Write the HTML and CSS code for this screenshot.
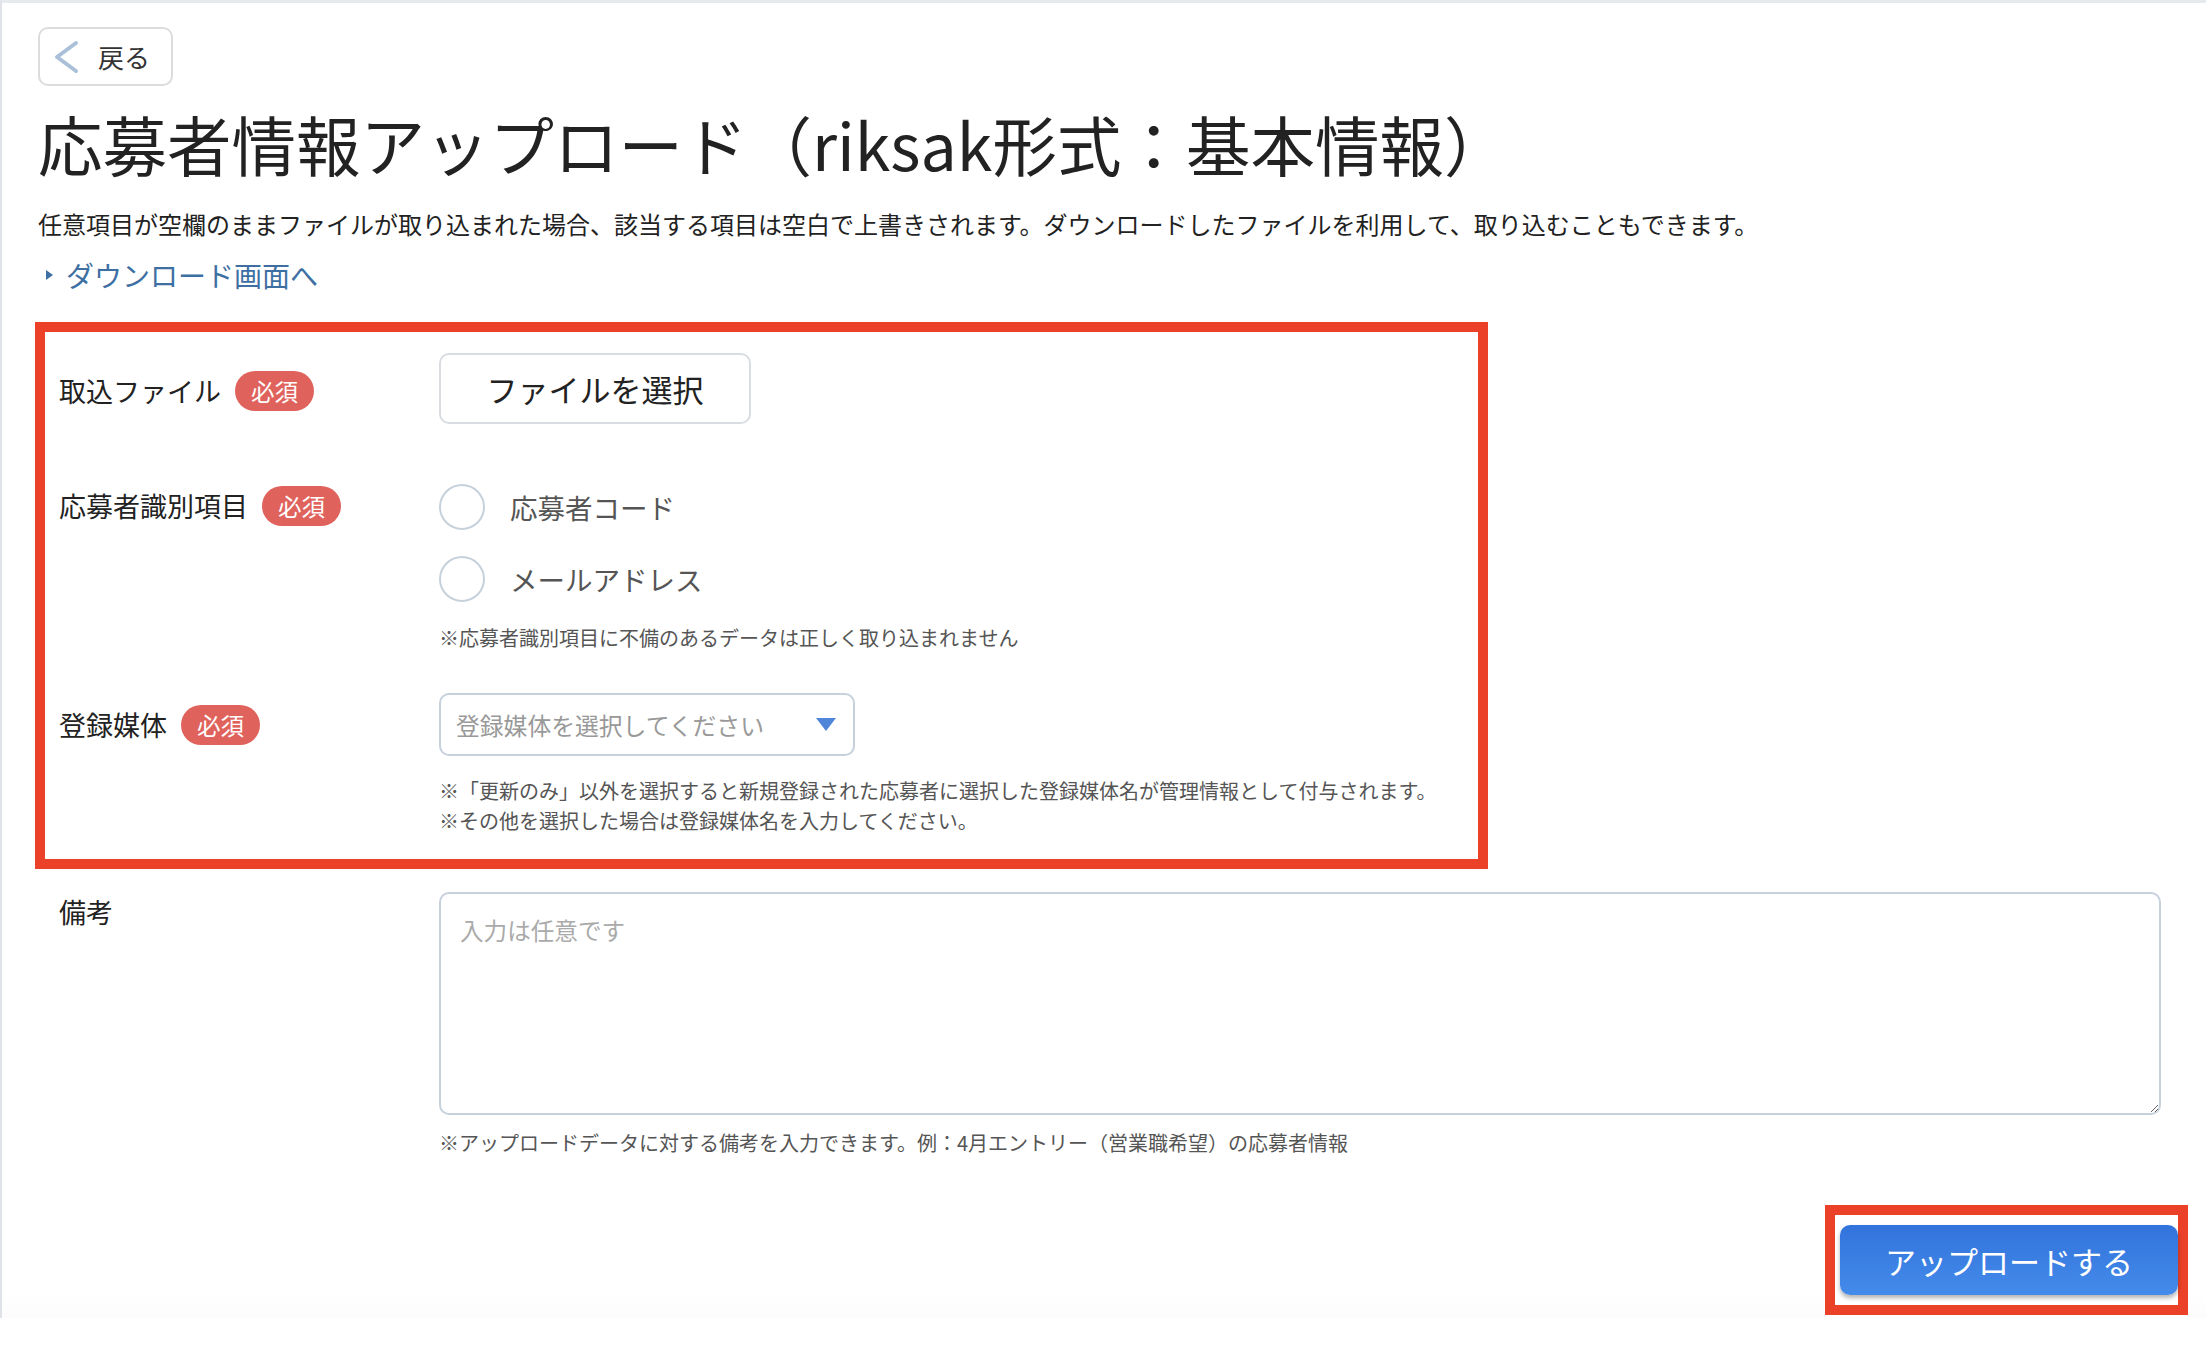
FILE: index.html
```html
<!DOCTYPE html>
<html lang="ja">
<head>
	<meta charset="utf-8">
	<title>応募者情報アップロード</title>
	<link rel="stylesheet" href="styles.css">
</head>
<body>
	<div class="page">
		<button class="back">
			<svg class="back-icon" width="26" height="34" viewBox="0 0 26 34"><polyline points="23,3 4,17 23,31" fill="none" stroke="#a9c0d8" stroke-width="4" stroke-linecap="round" stroke-linejoin="round"/></svg>
			<span>戻る</span>
		</button>

		<h1 class="title">応募者情報アップロード（riksak形式：基本情報）</h1>
		<p class="lead">任意項目が空欄のままファイルが取り込まれた場合、該当する項目は空白で上書きされます。ダウンロードしたファイルを利用して、取り込むこともできます。</p>
		<a class="dl-link" href="#"><span class="tri"></span>ダウンロード画面へ</a>

		<div class="mark form-box">
			<div class="row row-file">
				<div class="label">取込ファイル<span class="req">必須</span></div>
				<div class="ctrl">
					<button class="file-btn">ファイルを選択</button>
				</div>
			</div>

			<div class="row row-key">
				<div class="label">応募者識別項目<span class="req">必須</span></div>
				<div class="ctrl">
					<label class="radio"><input type="radio" name="key"><span>応募者コード</span></label>
					<label class="radio"><input type="radio" name="key"><span>メールアドレス</span></label>
					<p class="note first">※応募者識別項目に不備のあるデータは正しく取り込まれません</p>
				</div>
			</div>

			<div class="row row-media">
				<div class="label">登録媒体<span class="req">必須</span></div>
				<div class="ctrl">
					<div class="select-wrap">
						<select class="select">
							<option>登録媒体を選択してください</option>
						</select>
						<svg class="caret" width="20" height="13" viewBox="0 0 20 13"><polygon points="0,0 20,0 10,13" fill="#4f86d9"/></svg>
					</div>
					<p class="note first">※「更新のみ」以外を選択すると新規登録された応募者に選択した登録媒体名が管理情報として付与されます。</p>
					<p class="note">※その他を選択した場合は登録媒体名を入力してください。</p>
				</div>
			</div>
		</div>

		<div class="row row-memo">
			<div class="label">備考</div>
			<div class="ctrl">
				<textarea class="memo" placeholder="入力は任意です"></textarea>
				<p class="note memo-note">※アップロードデータに対する備考を入力できます。例：4月エントリー（営業職希望）の応募者情報</p>
			</div>
		</div>

		<div class="submit-bar">
			<div class="mark submit-box">
				<button class="upload">アップロードする</button>
			</div>
		</div>
	</div>
</body>
</html>
```

FILE: styles.css
```css
html, body {
	margin: 0;
	background: #fff;
}

body {
	font-family: "Noto Sans CJK JP", "Noto Sans", sans-serif;
	color: #222;
}

.page {
	box-sizing: border-box;
	height: 1318px;
	border-top: 3px solid #e6eaee;
	border-left: 2px solid #dfe3e8;
	padding: 24px 0 0 36px;
	background: linear-gradient(#fff 1290px, #fcfcfc);
}

/* back button */
.back {
	box-sizing: border-box;
	display: flex;
	align-items: center;
	width: 135px;
	height: 59px;
	padding: 0 0 0 13px;
	border: 2px solid #dcdcdc;
	border-radius: 10px;
	background: #fff;
	font-family: inherit;
	font-size: 26px;
	color: #333;
}

.back-icon {
	margin-right: 19px;
}

.title {
	margin: 17px 0 0;
	font-size: 64.5px;
	font-weight: 400;
	line-height: 80px;
	letter-spacing: 0;
}

.lead {
	margin: 24px 0 0;
	font-size: 24px;
	line-height: 34px;
}

.dl-link {
	display: flex;
	align-items: center;
	margin-top: 16px;
	height: 36px;
	font-size: 28px;
	color: #3d6fa3;
	text-decoration: none;
}

.dl-link .tri {
	width: 0;
	height: 0;
	margin: 0 13px 0 8px;
	border-top: 5px solid transparent;
	border-bottom: 5px solid transparent;
	border-left: 7px solid #3d6fa3;
}

/* red highlight frames */
.mark {
	border: 10px solid #ea4128;
}

.form-box {
	width: 1419px;
	margin: 29px 0 0 -3px;
	padding: 21px 0 23px 14px;
}

/* form rows */
.row {
	display: flex;
	align-items: flex-start;
}

.label {
	flex: 0 0 380px;
	display: flex;
	align-items: center;
	font-size: 27px;
	line-height: 46px;
}

.req {
	display: inline-block;
	margin-left: 14px;
	padding: 0 16px;
	height: 40px;
	border-radius: 20px;
	background: #e0625c;
	color: #fff;
	font-size: 23.5px;
	line-height: 40px;
}

.row-file .label {
	height: 71px;
	padding-top: 4px;
	box-sizing: border-box;
}

.row-key {
	margin-top: 59px;
}

.row-media {
	margin-top: 40px;
}

.row-media .label {
	height: 63px;
}

.file-btn {
	box-sizing: border-box;
	width: 312px;
	height: 71px;
	border: 2px solid #d9dde2;
	border-radius: 10px;
	background: #fff;
	font-family: inherit;
	font-size: 31px;
	color: #222;
}

.radio {
	display: flex;
	align-items: center;
	height: 47px;
	margin-bottom: 25px;
	font-size: 27.5px;
	color: #555;
}

.radio input {
	appearance: none;
	box-sizing: border-box;
	width: 46px;
	height: 46px;
	margin: 0 25px 0 0;
	border: 2px solid #c6d1dc;
	border-radius: 50%;
	background: #fff;
}

.note {
	margin: 0;
	font-size: 20px;
	line-height: 30px;
	color: #555;
}

.radio + .radio + .note.first {
	margin-top: -4px;
}

.select-wrap {
	position: relative;
	width: 416px;
}

.select {
	box-sizing: border-box;
	appearance: none;
	width: 416px;
	height: 63px;
	padding: 0 0 0 15px;
	border: 2px solid #c6d1dc;
	border-radius: 10px;
	background: #fff;
	font-family: inherit;
	font-size: 23.8px;
	color: #999;
}

.caret {
	position: absolute;
	right: 19px;
	top: 25px;
}

.select-wrap + .note.first {
	margin-top: 20px;
}

/* memo row */
.row-memo {
	margin-top: 23px;
	padding-left: 21px;
}

.row-memo .label {
	line-height: 40px;
}

.memo {
	display: block;
	box-sizing: border-box;
	width: 1722px;
	height: 223px;
	padding: 19px 19px;
	border: 2px solid #c6d1dc;
	border-radius: 10px;
	font-family: inherit;
	font-size: 23.6px;
	color: #222;
}

.memo::placeholder {
	color: #aaa;
}

.memo-note {
	margin-top: 13px;
}

/* upload */
.submit-bar {
	display: flex;
	justify-content: flex-end;
	margin: 47px 18px 0 0;
}

.submit-box {
	padding: 10px 0 10px 5px;
	background: #fff;
}

.upload {
	display: block;
	width: 338px;
	height: 70px;
	border: 0;
	border-radius: 10px;
	background: linear-gradient(#3273dc, #448bea);
	box-shadow: 0 3px 4px rgba(0, 0, 0, 0.3);
	font-family: inherit;
	font-size: 31px;
	color: #fff;
}
```
